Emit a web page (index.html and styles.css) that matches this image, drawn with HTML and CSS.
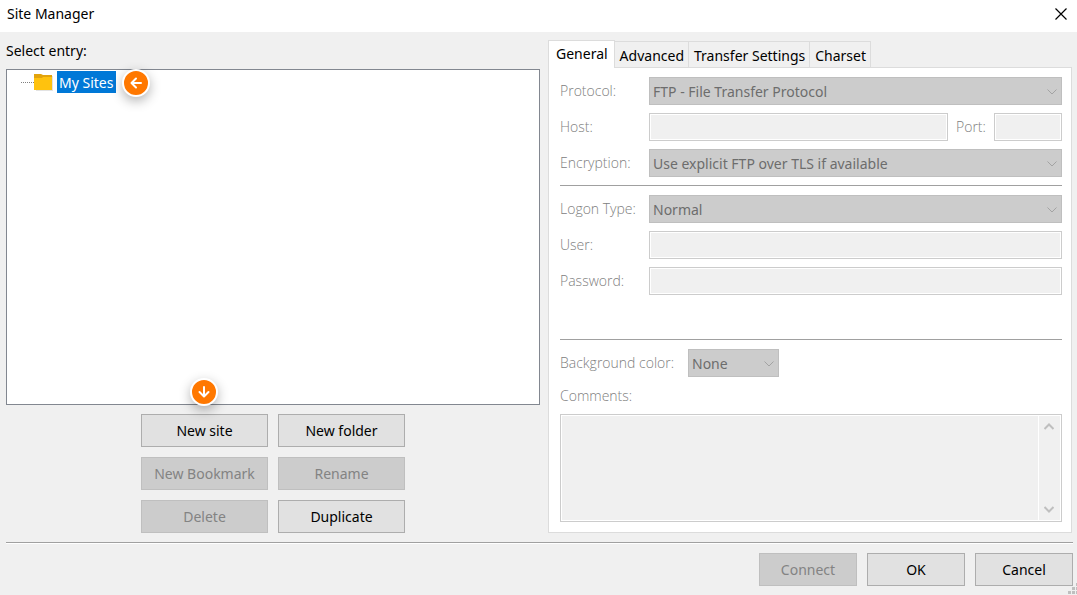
FILE: index.html
```html
<!DOCTYPE html>
<html lang="en">
<head>
  <meta charset="UTF-8" />
  <meta name="viewport" content="width=device-width, initial-scale=1.0" />
  <title>Site Manager</title>
  <link rel="stylesheet" href="styles.css">
</head>
<body>

  <header class="titlebar">
    <h1>Site Manager</h1>
    <button class="close" type="button" aria-label="Close">
      <svg width="12" height="12" viewBox="0 0 12 12"><path d="M0.5 0.5L11.5 11.5M11.5 0.5L0.5 11.5" stroke="#000" stroke-width="1.2"/></svg>
    </button>
  </header>

  <main class="content">
    <section class="sites">
      <h2 id="treeLabel">Select entry:</h2>
      <div class="tree" role="tree" aria-labelledby="treeLabel">
        <div class="node" role="treeitem" aria-selected="true">
          <span class="branch"></span>
          <svg class="folder" width="20" height="18" viewBox="0 0 20 18">
            <path d="M2 3h17v15H2z" fill="#e3e3e3"/>
            <path d="M0 1h7l2 1h9v4H0z" fill="#e2a30c"/>
            <path d="M0 5h8l1-1h9v13H0z" fill="#ffc20e"/>
          </svg>
          <span class="node-name">My Sites</span>
          <span class="badge badge-left">
            <svg width="12" height="12" viewBox="0 0 12 12"><path d="M11 6H2M6 1.5L1.5 6L6 10.5"/></svg>
          </span>
        </div>
      </div>
      <div class="actions">
        <button type="button">New site
          <span class="badge badge-down">
            <svg width="12" height="12" viewBox="0 0 12 12"><path d="M6 1V10M1.5 6L6 10.5L10.5 6"/></svg>
          </span>
        </button>
        <button type="button">New folder</button>
        <button type="button" disabled>New Bookmark</button>
        <button type="button" disabled>Rename</button>
        <button type="button" disabled>Delete</button>
        <button type="button">Duplicate</button>
      </div>
    </section>

    <section class="settings">
      <div class="tabs" role="tablist">
        <button class="tab active" type="button" role="tab" aria-selected="true">General</button>
        <button class="tab" type="button" role="tab">Advanced</button>
        <button class="tab" type="button" role="tab">Transfer Settings</button>
        <button class="tab" type="button" role="tab">Charset</button>
      </div>

      <form class="panel">
        <div class="row">
          <label for="protocol">Protocol:</label>
          <div class="select">
            <select id="protocol" disabled><option>FTP - File Transfer Protocol</option></select>
            <svg width="10" height="6" viewBox="0 0 10 6"><path d="M0.5 0.5L5 5L9.5 0.5"/></svg>
          </div>
        </div>
        <div class="row">
          <label for="host">Host:</label>
          <input type="text" id="host" disabled>
          <label class="port-label" for="port">Port:</label>
          <input class="port" type="text" id="port" disabled>
        </div>
        <div class="row">
          <label for="encryption">Encryption:</label>
          <div class="select">
            <select id="encryption" disabled><option>Use explicit FTP over TLS if available</option></select>
            <svg width="10" height="6" viewBox="0 0 10 6"><path d="M0.5 0.5L5 5L9.5 0.5"/></svg>
          </div>
        </div>
        <hr>
        <div class="row">
          <label for="logon">Logon Type:</label>
          <div class="select">
            <select id="logon" disabled><option>Normal</option></select>
            <svg width="10" height="6" viewBox="0 0 10 6"><path d="M0.5 0.5L5 5L9.5 0.5"/></svg>
          </div>
        </div>
        <div class="row">
          <label for="user">User:</label>
          <input type="text" id="user" disabled>
        </div>
        <div class="row">
          <label for="password">Password:</label>
          <input type="password" id="password" disabled>
        </div>
        <hr class="lower">
        <div class="row">
          <label class="color-label" for="color">Background color:</label>
          <div class="select small">
            <select id="color" disabled><option>None</option></select>
            <svg width="10" height="6" viewBox="0 0 10 6"><path d="M0.5 0.5L5 5L9.5 0.5"/></svg>
          </div>
        </div>
        <label class="comments-label" for="comments">Comments:</label>
        <div class="comments">
          <textarea id="comments" disabled></textarea>
          <div class="scrollbar">
            <svg width="10" height="7" viewBox="0 0 10 7"><path d="M0.5 6L5 1.5L9.5 6"/></svg>
            <svg width="10" height="7" viewBox="0 0 10 7"><path d="M0.5 1L5 5.5L9.5 1"/></svg>
          </div>
        </div>
      </form>
    </section>
  </main>

  <footer class="footer">
    <button type="button" disabled>Connect</button>
    <button type="button">OK</button>
    <button type="button">Cancel</button>
    <svg class="grip" width="11" height="11" viewBox="0 0 11 11">
      <path d="M8 0h3v3H8zM4 4h3v3H4zM8 4h3v3H8zM0 8h3v3H0zM4 8h3v3H4zM8 8h3v3H8z" fill="#bfbfbf"/>
    </svg>
  </footer>

</body>
</html>
```
FILE: styles.css
```css
* {
  box-sizing: border-box;
}

body {
  margin: 0;
  min-height: 100vh;
  display: flex;
  flex-direction: column;
  background: #f0f0f0;
  color: #000;
  font: 14px/20px "Noto Sans", "Open Sans", sans-serif;
}

h1, h2 {
  margin: 0;
  font-size: 14px;
  font-weight: normal;
}

button, input, select, textarea {
  font: inherit;
  color: inherit;
  margin: 0;
  border-radius: 0;
}

.titlebar {
  display: flex;
  align-items: center;
  justify-content: space-between;
  height: 32px;
  padding: 0 10px 4px 7px;
  background: #fff;
}

.close {
  display: flex;
  padding: 0;
  border: none;
  background: none;
}

.content {
  flex: 1;
  display: flex;
  gap: 8px;
  margin: 0 5px 0 6px;
  padding: 8px 0 9px;
}

/* left side */
.sites {
  flex: 534;
  display: flex;
  flex-direction: column;
}

.sites h2 {
  margin: 1px 0 8px;
}

.tree {
  flex: 1;
  border: 1px solid #828790;
  background: #fff;
}

.node {
  position: relative;
  display: flex;
  align-items: center;
  width: max-content;
  margin: 1px 0 0 14px;
}

.branch {
  width: 13px;
  border-top: 1px dotted #808080;
}

.folder {
  margin-right: 3px;
}

.node-name {
  padding: 2px 3px 0 2px;
  background: #0078d7;
  color: #fff;
}

.badge {
  position: absolute;
  display: flex;
  align-items: center;
  justify-content: center;
  width: 28px;
  height: 28px;
  border: 2px solid #fff;
  border-radius: 50%;
  background: #ff7800;
  box-shadow: 0 4px 12px rgba(0, 0, 0, 0.3);
}

.badge path {
  fill: none;
  stroke: #fff;
  stroke-width: 2;
  stroke-linecap: round;
  stroke-linejoin: round;
}

.badge-left {
  left: 100%;
  top: -2px;
  margin-left: 6px;
}

.badge-down {
  left: 50%;
  bottom: 100%;
  margin: 0 0 9px -15px;
}

.actions {
  display: grid;
  grid-template-columns: 127px 127px;
  gap: 10px;
  justify-content: center;
  margin-top: 9px;
}

.actions button,
.footer button {
  position: relative;
  height: 33px;
  padding: 0;
  border: 1px solid #adadad;
  background: #e1e1e1;
}

.actions button:disabled,
.footer button:disabled {
  border-color: #bfbfbf;
  background: #ccc;
  color: #838383;
}

/* right side */
.settings {
  flex: 524;
  min-width: 0;
}

.tabs {
  display: flex;
  align-items: flex-end;
}

.tab {
  height: 26px;
  padding: 2px 4px 0 5px;
  border: 1px solid #dcdcdc;
  border-width: 1px 1px 0 0;
  background: #f0f0f0;
}

.tab.active {
  position: relative;
  height: 28px;
  margin-bottom: -1px;
  padding: 0 6px 2px 7px;
  border-left-width: 1px;
  background: #fff;
}

.panel {
  display: flex;
  flex-direction: column;
  gap: 8px;
  padding: 9px 9px 10px 11px;
  border: 1px solid #dcdcdc;
  background: #fff;
}

.row {
  display: flex;
  height: 28px;
}

label {
  width: 89px;
  line-height: 28px;
  color: #808080;
  font-family: "Open Sans", "Noto Sans", sans-serif;
  font-weight: 300;
  white-space: nowrap;
}

.port-label {
  width: 46px;
  padding-left: 8px;
}

.color-label {
  width: 128px;
}

.row input {
  flex: 1;
  min-width: 0;
  border: 1px solid #ccc;
  background: #f0f0f0;
  box-shadow: inset 0 0 0 1px #fff;
}

.row .port {
  flex: none;
  width: 68px;
}

.select {
  position: relative;
  flex: 1;
}

.select.small {
  flex: none;
  width: 91px;
}

.select select {
  display: block;
  width: 100%;
  height: 28px;
  padding: 1px 24px 0 3px;
  border: 1px solid #bfbfbf;
  background: #ccc;
  color: #6d6d6d;
  opacity: 1;
  appearance: none;
}

.select svg {
  position: absolute;
  right: 5px;
  top: 12px;
}

.select path {
  fill: none;
  stroke: #a3a3a3;
}

hr {
  width: 100%;
  margin: 0 0 1px;
  border: none;
  border-top: 1px solid #a0a0a0;
}

hr.lower {
  margin-top: 36px;
}

.comments-label {
  padding-top: 1px;
  line-height: 20px;
}

.comments {
  display: flex;
  height: 108px;
  border: 1px solid #ccc;
  background: #f0f0f0;
  box-shadow: inset 0 0 0 1px #fff;
}

.comments textarea {
  flex: 1;
  margin: 1px 0;
  border: none;
  border-right: 1px solid #fff;
  background: none;
  resize: none;
}

.scrollbar {
  display: flex;
  flex-direction: column;
  justify-content: space-between;
  padding: 8px 7px 8px 5px;
}

.scrollbar path {
  fill: none;
  stroke: #bfbfbf;
  stroke-width: 2;
}

/* bottom buttons */
.footer {
  position: relative;
  display: flex;
  justify-content: flex-end;
  gap: 10px;
  margin: 0 4px 0 6px;
  padding: 10px 0 9px;
  border-top: 1px solid #a0a0a0;
  box-shadow: inset 0 1px #fff;
}

.footer button {
  width: 98px;
}

.grip {
  position: absolute;
  right: -6px;
  bottom: 1px;
}
```
